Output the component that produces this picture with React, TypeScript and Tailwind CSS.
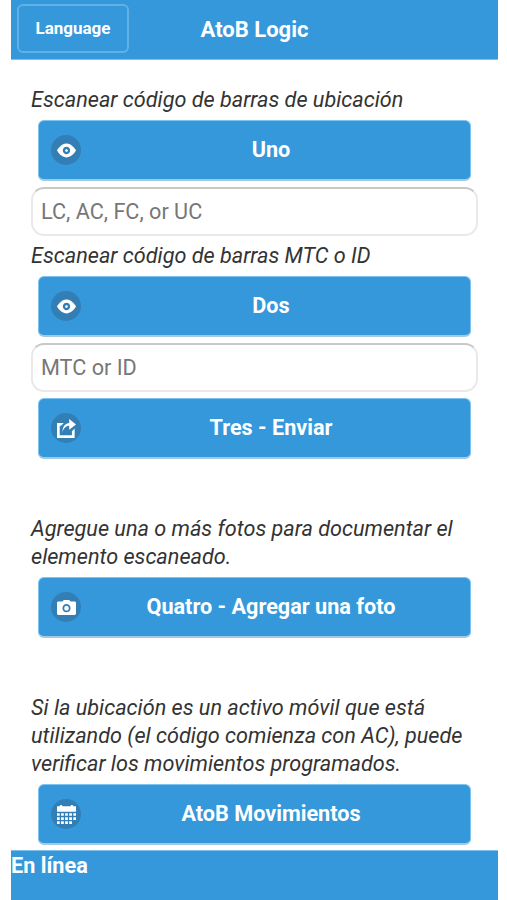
import type { ReactNode } from "react";

const icons = {
  eye: "M7,1.9C2.8,1.9,0,7,0,7s2.8,5.1,7,5.1S14,7,14,7S11.200,1.9,7,1.9z M7,9.7c-1.5,0-2.7-1.2-2.7-2.7c0-1.5,1.2-2.7,2.7-2.7s2.7,1.2,2.7,2.7C9.7,8.5,8.5,9.7,7,9.7z M7,6C6.448,6,6,6.447,6,7c0,0.553,0.448,1,1,1s1-0.447,1-1C8,6.447,7.552,6,7,6z",
  action: "M9,5v3l5-4L9,0v3c0,0-5,0-5,7C5,5,9,5,9,5z M11,12H2V5h1l2-2H0v11h13V7l-2,2V12z",
  camera:
    "M13,2.5H10L9,1.5H5L4,2.5H1c-0.552,0-1,0.448-1,1v8c0,0.552,0.448,1,1,1h12c0.552,0,1-0.448,1-1v-8C14,2.948,13.552,2.5,13,2.5z M7,10.5c-1.657,0-3-1.344-3-3c0-1.657,1.343-3,3-3s3,1.343,3,3C10,9.156,8.657,10.5,7,10.5z M7,5.8c-0.939,0-1.7,0.761-1.7,1.7s0.761,1.7,1.7,1.7s1.7-0.761,1.7-1.7S7.939,5.8,7,5.8z",
  calendar:
    "M0,8h2V6H0z M3,8h2V6H3z M6,8h2V6H6z M9,8h2V6H9z M12,8h2V6h-2z M0,11h2V9H0z M3,11h2V9H3z M6,11h2V9H6z M9,11h2V9H9z M12,11h2V9h-2z M0,14h2v-2H0z M3,14h2v-2H3z M6,14h2v-2H6z M9,14h2v-2H9z M12,1c0-0.553-0.447-1-1-1s-1,0.447-1,1H4c0-0.553-0.447-1-1-1S2,0.447,2,1H0v4h14V1H12z",
};

function ActionButton({ icon, children }: { icon: keyof typeof icons; children: ReactNode }) {
  return (
    <button className="mx-[7px] my-1.5 flex h-[61px] shrink-0 items-center rounded-md border border-[#7fc4f0] border-b-2 border-b-[#a3c9e3] bg-[#3498db] px-3 text-[21.65px] font-bold text-white">
      <span className="flex size-[30px] shrink-0 items-center justify-center rounded-full bg-[#337fb5]">
        <svg viewBox="0 0 14 14" className="size-[19px]" fill="currentColor" fillRule="evenodd">
          <path d={icons[icon]} />
        </svg>
      </span>
      <span className="grow pt-px pl-[3px]">{children}</span>
    </button>
  );
}

function Label({ children }: { children: ReactNode }) {
  return <p className="whitespace-nowrap text-[21.65px] leading-7 italic text-[#333]">{children}</p>;
}

function Field({ placeholder }: { placeholder: string }) {
  return (
    <input
      placeholder={placeholder}
      className="mb-1.5 h-[49px] w-full shrink-0 rounded-[13px] border-2 border-[#e9e9e9] border-t-[#c8c8c8] bg-white px-2 text-[21.65px] text-[#333] outline-none placeholder:text-[#777]"
    />
  );
}

export default function App() {
  return (
    <div className="h-[900px] w-[507px] overflow-hidden bg-white pl-[11px] pr-[9px] font-[Roboto,sans-serif]">
      <div className="flex h-full flex-col">
        <header className="grid h-[60px] shrink-0 grid-cols-[1fr_auto_1fr] items-center border-b border-[#7fc0ec] bg-[#3498db] text-white">
          <button className="ml-1.5 mb-0.5 h-[49px] w-[112px] rounded-md border-2 border-[#5fb1e8] pt-px text-[17px] font-bold">
            Language
          </button>
          <h1 className="text-[22px] font-bold">AtoB Logic</h1>
        </header>

        <main className="flex min-h-0 grow flex-col px-5 pt-[26px]">
          <Label>Escanear código de barras de ubicación</Label>
          <ActionButton icon="eye">Uno</ActionButton>
          <Field placeholder="LC, AC, FC, or UC" />
          <Label>Escanear código de barras MTC o ID</Label>
          <ActionButton icon="eye">Dos</ActionButton>
          <Field placeholder="MTC or ID" />
          <div className="-mt-1.5 flex flex-col">
            <ActionButton icon="action">Tres - Enviar</ActionButton>
          </div>

          <div className="mt-[50px] flex flex-col">
            <Label>
              Agregue una o más fotos para documentar el
              <br />
              elemento escaneado.
            </Label>
            <ActionButton icon="camera">Quatro - Agregar una foto</ActionButton>
          </div>

          <div className="mt-[50px] flex flex-col">
            <Label>
              Si la ubicación es un activo móvil que está
              <br />
              utilizando (el código comienza con AC), puede
              <br />
              verificar los movimientos programados.
            </Label>
            <ActionButton icon="calendar">AtoB Movimientos</ActionButton>
          </div>
        </main>

        <footer className="h-[50px] shrink-0 border-t border-[#7fc0ec] bg-[#3498db] text-[21.65px] leading-[29px] font-bold text-white">
          En línea
        </footer>
      </div>
    </div>
  );
}
